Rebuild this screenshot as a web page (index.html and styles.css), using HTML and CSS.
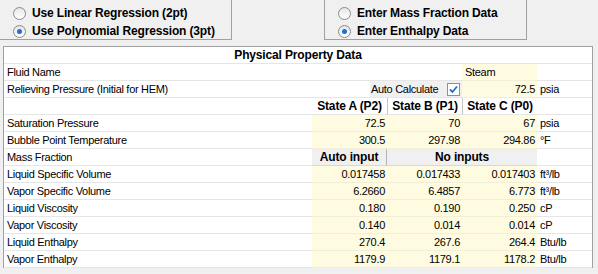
FILE: index.html
```html
<!DOCTYPE html>
<html lang="en">
<head>
    <meta charset="UTF-8">
    <meta name="viewport" content="width=device-width, initial-scale=1.0">
    <title>Physical Property Data</title>
    <link rel="stylesheet" href="styles.css">
</head>
<body>
    <div class="options">
        <div class="group group-left">
            <label class="radio"><span class="circle"></span>Use Linear Regression (2pt)</label>
            <label class="radio on"><span class="circle"></span>Use Polynomial Regression (3pt)</label>
        </div>
        <div class="group group-right">
            <label class="radio"><span class="circle"></span>Enter Mass Fraction Data</label>
            <label class="radio on"><span class="circle"></span>Enter Enthalpy Data</label>
        </div>
    </div>

    <div class="sheet">
        <div class="cell title">Physical Property Data</div>

        <div class="cell label">Fluid Name</div>
        <div class="cell span2"></div>
        <div class="cell input">Steam</div>
        <div class="cell unit"></div>

        <div class="cell label">Relieving Pressure (Initial for HEM)</div>
        <div class="cell span2 auto-cell">
            <div class="auto">
                <span>Auto Calculate</span>
                <span class="check">
                    <svg width="11" height="11" viewBox="0 0 11 11">
                        <path d="M2 5.5 L4.5 8 L9 2.5" fill="none" stroke="#2a6cc6" stroke-width="1.8"/>
                    </svg>
                </span>
            </div>
        </div>
        <div class="cell input num">72.5</div>
        <div class="cell unit">psia</div>

        <div class="cell label"></div>
        <div class="cell head">State A (P2)</div>
        <div class="cell head sep">State B (P1)</div>
        <div class="cell head sep">State C (P0)</div>
        <div class="cell unit"></div>

        <div class="cell label">Saturation Pressure</div>
        <div class="cell input num">72.5</div>
        <div class="cell input num">70</div>
        <div class="cell input num">67</div>
        <div class="cell unit">psia</div>

        <div class="cell label">Bubble Point Temperature</div>
        <div class="cell input num">300.5</div>
        <div class="cell input num">297.98</div>
        <div class="cell input num">294.86</div>
        <div class="cell unit">°F</div>

        <div class="cell label">Mass Fraction</div>
        <div class="cell btn btn-sep">Auto input</div>
        <div class="cell btn span2">No inputs</div>
        <div class="cell unit"></div>

        <div class="cell label">Liquid Specific Volume</div>
        <div class="cell input num">0.017458</div>
        <div class="cell input num">0.017433</div>
        <div class="cell input num">0.017403</div>
        <div class="cell unit">ft³/lb</div>

        <div class="cell label">Vapor Specific Volume</div>
        <div class="cell input num">6.2660</div>
        <div class="cell input num">6.4857</div>
        <div class="cell input num">6.773</div>
        <div class="cell unit">ft³/lb</div>

        <div class="cell label">Liquid Viscosity</div>
        <div class="cell input num">0.180</div>
        <div class="cell input num">0.190</div>
        <div class="cell input num">0.250</div>
        <div class="cell unit">cP</div>

        <div class="cell label">Vapor Viscosity</div>
        <div class="cell input num">0.140</div>
        <div class="cell input num">0.014</div>
        <div class="cell input num">0.014</div>
        <div class="cell unit">cP</div>

        <div class="cell label">Liquid Enthalpy</div>
        <div class="cell input num">270.4</div>
        <div class="cell input num">267.6</div>
        <div class="cell input num">264.4</div>
        <div class="cell unit">Btu/lb</div>

        <div class="cell label">Vapor Enthalpy</div>
        <div class="cell input num">1179.9</div>
        <div class="cell input num">1179.1</div>
        <div class="cell input num">1178.2</div>
        <div class="cell unit">Btu/lb</div>
    </div>
</body>
</html>
```

FILE: styles.css
```css
body {
    margin: 0;
    padding: 0;
    background-color: #f0f0f0;
    font-family: "Liberation Sans", Arial, sans-serif;
    font-size: 11px;
    letter-spacing: -0.3px;
    color: #000;
}

/* radio groups */
.options {
    display: flex;
    height: 40px;
}

.group {
    box-sizing: border-box;
    height: 40px;
    padding: 4px 0 0 13px;
    border-bottom: 1px solid #a0a0a0;
}

.group-left {
    width: 232px;
    border-right: 1px solid #a0a0a0;
}

.group-right {
    width: 203px;
    margin-left: 92px;
    border-left: 1px solid #a0a0a0;
    border-right: 1px solid #a0a0a0;
}

.radio {
    display: flex;
    align-items: center;
    gap: 6px;
    height: 18px;
    font-size: 12px;
    font-weight: bold;
    letter-spacing: -0.15px;
}

.circle {
    box-sizing: border-box;
    width: 13px;
    height: 13px;
    border: 1px solid #8a8a8a;
    border-radius: 50%;
    background: linear-gradient(#e6e6e6, #ffffff);
    display: flex;
    align-items: center;
    justify-content: center;
}

.radio.on .circle::after {
    content: "";
    width: 5px;
    height: 5px;
    border-radius: 50%;
    background: #1f6fd6;
}

/* property sheet */
.sheet {
    display: grid;
    grid-template-columns: 308px 75px 75px 75px 55px;
    grid-auto-rows: 17px;
    width: 588px;
    margin: 6px 0 0 3px;
    border: 1px solid #a0a0a0;
    border-bottom: none;
    background: #fff;
}

.cell {
    box-sizing: border-box;
    display: flex;
    align-items: center;
    border-bottom: 1px solid #e6e6e6;
    line-height: 16px;
    white-space: nowrap;
    overflow: hidden;
}

.title {
    grid-column: 1 / -1;
    justify-content: center;
    font-size: 12px;
    font-weight: bold;
    letter-spacing: -0.15px;
}

.label {
    padding-left: 3px;
}

.span2 {
    grid-column: span 2;
}

.input {
    background: #fefbe1;
    padding-left: 3px;
    border-bottom-color: #f2efd8;
}

.num {
    justify-content: flex-end;
    padding: 0 2px 0 0;
}

.unit {
    padding-left: 3px;
}

.head {
    justify-content: center;
    font-size: 12px;
    font-weight: bold;
    letter-spacing: -0.15px;
}

.head.sep {
    border-left: 1px solid #c4c4c4;
}

.btn {
    justify-content: center;
    background: #f0f0f0;
    font-size: 12px;
    font-weight: bold;
    letter-spacing: -0.15px;
    border-bottom-color: #d8d8d8;
}

.btn-sep {
    border-right: 1px solid #b4b4b4;
}

.auto-cell {
    justify-content: flex-end;
    align-items: stretch;
}

.auto {
    display: flex;
    align-items: center;
    justify-content: space-between;
    width: 92px;
    padding: 0 2px 0 1px;
    box-sizing: border-box;
    background: #f0f0f0;
}

.check {
    box-sizing: border-box;
    width: 13px;
    height: 13px;
    border: 1px solid #8f8f8f;
    background: #fff;
    display: flex;
    align-items: center;
    justify-content: center;
}
```
